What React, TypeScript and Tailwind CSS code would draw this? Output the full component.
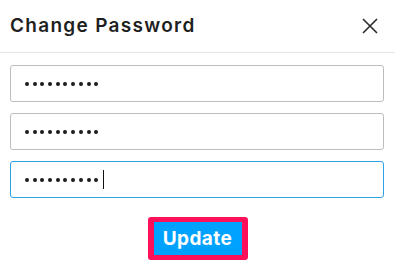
export default function App() {
  const fields = [false, false, true]

  return (
    <div className="w-[395px] h-[270px] bg-white font-['Inter',sans-serif] text-[#222]">
      <div className="h-[53px] flex items-center justify-between pl-[10px] pr-[17px] border-b border-[#e6e6e6]">
        <h2 className="text-[19px] font-semibold tracking-[1.3px] text-[#1f1f1f] pt-[1px]">Change Password</h2>
        <button className="w-[16px] h-[16px] text-[#2a2a2a]" aria-label="Close">
          <svg viewBox="0 0 16 16" className="w-full h-full" fill="none" stroke="currentColor" strokeWidth="1.6">
            <path d="M1 1L15 15M15 1L1 15" />
          </svg>
        </button>
      </div>

      <div className="pl-[10px] pr-[11px] pt-[12px] flex flex-col gap-[11px]">
        {fields.map((focused, i) => (
          <div
            key={i}
            className={
              focused
                ? 'h-[37px] rounded-[3px] border border-[#2fa3e6] flex items-center pl-[14px]'
                : 'h-[37px] rounded-[3px] border border-[#bdbdbd] flex items-center pl-[14px]'
            }
          >
            <div className="flex items-center gap-[3.7px]">
              {Array.from({ length: 10 }).map((_, j) => (
                <span key={j} className="w-[4px] h-[4px] rounded-full bg-[#1a1a1a]" />
              ))}
            </div>
            {focused && <span className="ml-[5px] w-[1px] h-[19px] bg-[#111]" />}
          </div>
        ))}
      </div>

      <div className="flex justify-center pt-[19px]">
        <button className="border-y-[5px] border-x-[6px] border-[#ff1159] rounded-[3px] bg-[#00a2ff] text-white text-[19px] font-bold tracking-[0.4px] h-[43px] w-[100px] flex items-center justify-center leading-none">
          Update
        </button>
      </div>
    </div>
  )
}
